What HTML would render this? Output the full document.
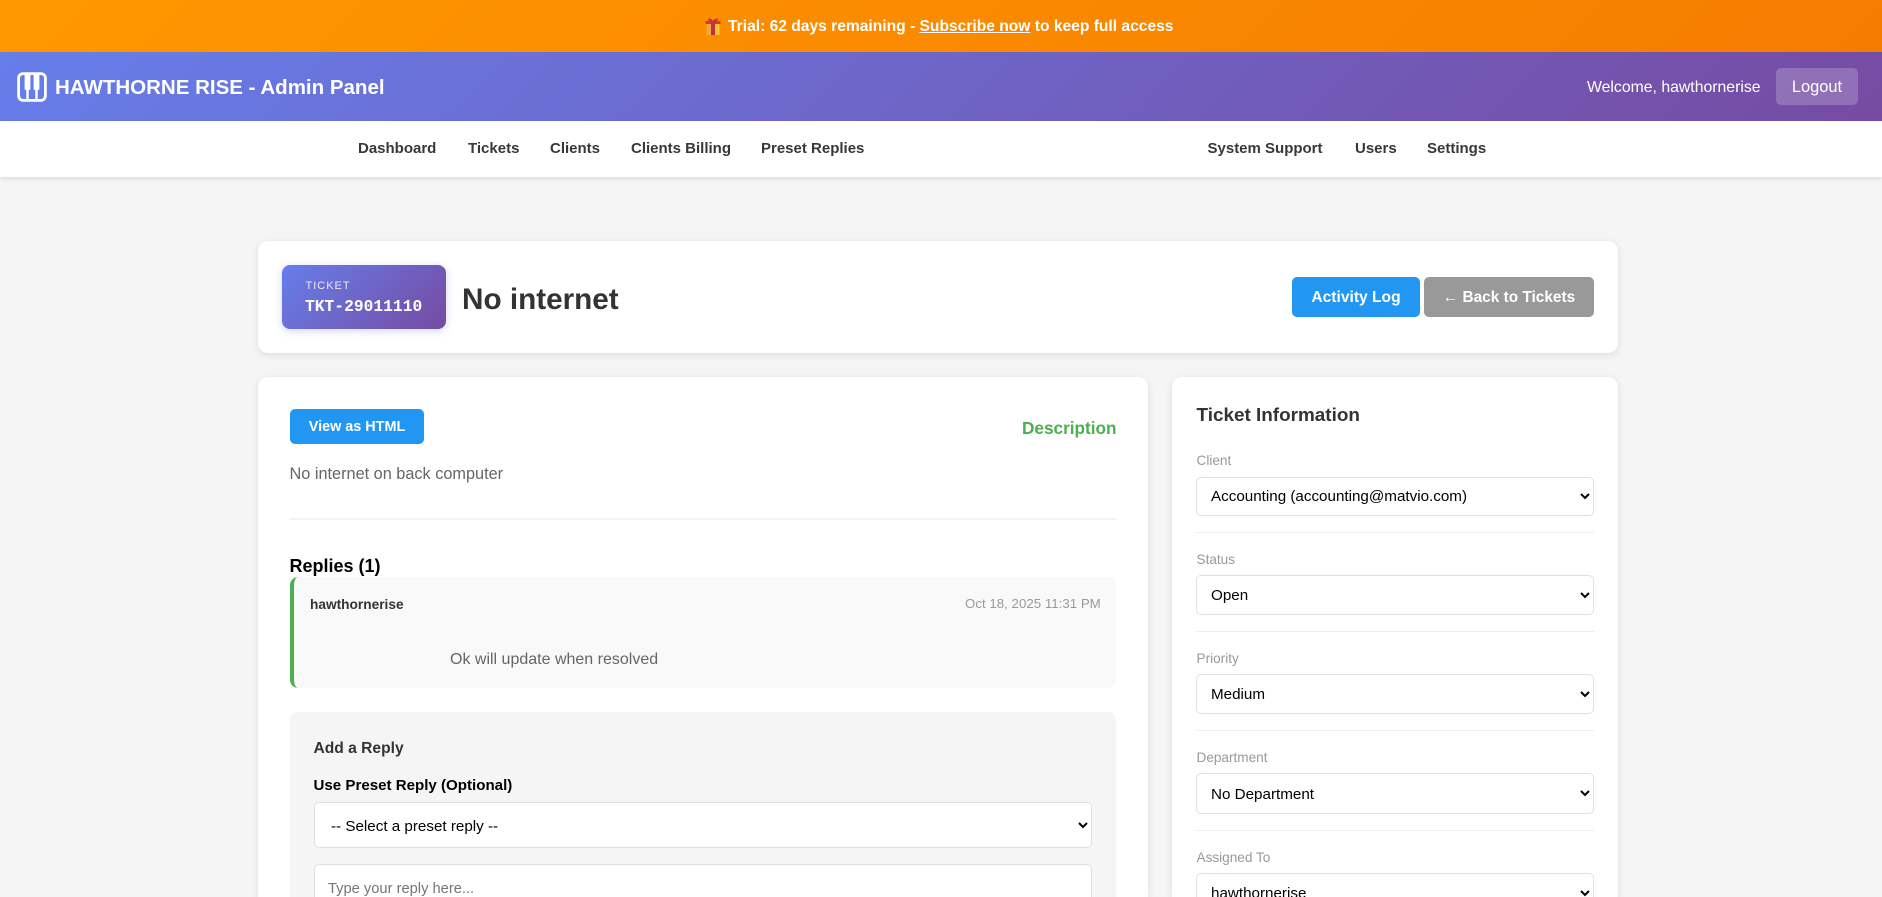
<!DOCTYPE html>
<html lang="en">
<head>
<meta charset="utf-8">
<title>Ticket TKT-29011110</title>
<style>
html,body{margin:0;padding:0;width:1882px;height:897px;overflow:hidden;background:#f5f5f5;font-family:"Liberation Sans",sans-serif}
#p{position:relative;width:1882px;height:897px;overflow:hidden}
#p>*{position:absolute}
.t{white-space:nowrap;line-height:24px;height:24px}
a{color:inherit}
.banner{left:0;top:0;width:1882px;height:52px;background:linear-gradient(135deg,#ff9800,#f57c00)}
.header{left:0;top:52px;width:1882px;height:69px;background:linear-gradient(135deg,#667eea,#764ba2)}
.nav{left:0;top:121px;width:1882px;height:56px;background:#fff;box-shadow:0 2px 4px rgba(0,0,0,.1)}
.n{top:137px;font-size:15px;font-weight:700;color:#383838}
.card{background:#fff;border-radius:10px;box-shadow:0 2px 8px rgba(0,0,0,.1)}
.btn{border-radius:5px;color:#fff;font-weight:700;text-align:center}
.lab{font-size:13.6px;color:#999;left:1196.5px}
.hr{left:1196px;width:398px;height:1px;background:#eee}
select{font-family:"Liberation Sans",sans-serif;font-size:15.2px;color:#000;background:#fff;border:1px solid #e0e0e0;border-radius:5px;padding:1px 10px 0;margin:0;box-sizing:border-box}
.s{left:1196px;width:398px}
</style>
</head>
<body>
<div id="p">
<div class="banner"></div>
<svg style="left:705px;top:18px" width="16" height="17" viewBox="0 0 16 17"><rect x="1.5" y="5" width="13" height="12" fill="#f7c531"/><rect x="1.5" y="5" width="5" height="12" fill="#f2a93b"/><rect x="0.5" y="3" width="15" height="3" fill="#cf3a3f"/><rect x="6" y="3" width="4" height="14" fill="#c5303f"/><path d="M8 3C6 0 3 0 3 1.6 3 3 6 3 8 3 10 3 13 3 13 1.6 13 0 10 0 8 3Z" fill="#c5303f"/></svg>
<div class="t" style="left:728px;top:15px;font-size:15.6px;font-weight:700;color:#fff">Trial: 62 days remaining - <a href="#" style="text-decoration:underline">Subscribe now</a> to keep full access</div>

<div class="header"></div>
<svg style="left:17px;top:72px" width="30" height="30" viewBox="0 0 30 30" fill="none"><rect x="1.6" y="1.6" width="26.8" height="26.8" rx="4.5" stroke="#fff" stroke-width="2.8"/><path d="M10.5 2v26M19.5 2v26" stroke="#fff" stroke-width="2.4"/><rect x="7.6" y="2" width="5.8" height="16" rx="1" fill="#fff"/><rect x="16.6" y="2" width="5.8" height="16" rx="1" fill="#fff"/></svg>
<div class="t" style="left:55px;top:76px;font-size:20.5px;font-weight:700;color:#fff">HAWTHORNE RISE - Admin Panel</div>
<div class="t" style="left:1587px;top:76px;font-size:15.8px;color:#fff">Welcome, hawthornerise</div>
<div class="t" style="left:1776px;top:68px;width:82px;height:37px;line-height:39px;border-radius:5px;background:rgba(255,255,255,.2);color:#fff;font-size:16.4px;text-align:center">Logout</div>

<div class="nav"></div>
<div class="t n" style="left:358px">Dashboard</div>
<div class="t n" style="left:468px">Tickets</div>
<div class="t n" style="left:550px">Clients</div>
<div class="t n" style="left:631px">Clients Billing</div>
<div class="t n" style="left:761px">Preset Replies</div>
<div class="t n" style="left:1207.5px">System Support</div>
<div class="t n" style="left:1355px">Users</div>
<div class="t n" style="left:1427px">Settings</div>

<div class="card" style="left:258px;top:241px;width:1360px;height:112px"></div>
<div style="left:282px;top:265px;width:164px;height:64px;border-radius:8px;background:linear-gradient(135deg,#667eea,#764ba2);box-shadow:0 2px 8px rgba(102,126,234,.3)"></div>
<div class="t" style="left:305.5px;top:274px;font-size:11px;letter-spacing:1px;color:rgba(255,255,255,.85)">TICKET</div>
<div class="t" style="left:305px;top:295px;font-family:'Liberation Mono',monospace;font-size:16.3px;font-weight:700;color:#fff">TKT-29011110</div>
<div class="t" style="left:462px;top:283px;height:32px;line-height:33px;font-size:29.7px;font-weight:700;color:#333">No internet</div>
<div class="t btn" style="left:1292px;top:277px;width:128px;height:40px;line-height:42px;background:#2196F3;font-size:15.6px">Activity Log</div>
<div class="t btn" style="left:1424px;top:277px;width:170px;height:40px;line-height:42px;background:#999;font-size:15.4px">← Back to Tickets</div>

<div class="card" style="left:258px;top:377px;width:890px;height:520px;border-radius:10px 10px 0 0"></div>
<div class="card" style="left:1172px;top:377px;width:446px;height:520px;border-radius:10px 10px 0 0"></div>

<div class="t btn" style="left:290px;top:409px;width:134px;height:35px;line-height:37px;background:#2196F3;font-size:14.4px">View as HTML</div>
<div class="t" style="left:1022px;top:416px;font-size:17.2px;font-weight:700;color:#4CAF50">Description</div>
<div class="t" style="left:289.5px;top:462px;font-size:16.3px;color:#666">No internet on back computer</div>
<div style="left:290px;top:518px;width:826px;height:2px;background:#f3f3f3"></div>
<div class="t" style="left:289.5px;top:554px;font-size:18px;font-weight:700;color:#000">Replies (1)</div>

<div style="left:290px;top:577px;width:822px;height:111px;border-left:4px solid #4CAF50;border-radius:8px;background:#f9f9f9"></div>
<div class="t" style="left:310px;top:593px;font-size:13.7px;font-weight:700;color:#333">hawthornerise</div>
<div class="t" style="left:965px;top:592px;font-size:13.3px;color:#999">Oct 18, 2025 11:31 PM</div>
<div class="t" style="left:450px;top:648px;font-size:16px;color:#666">Ok will update when resolved</div>

<div style="left:290px;top:712px;width:826px;height:185px;border-radius:8px 8px 0 0;background:#f5f5f5"></div>
<div class="t" style="left:313.5px;top:737px;font-size:15.6px;font-weight:700;color:#333">Add a Reply</div>
<div class="t" style="left:313.5px;top:774px;font-size:15.1px;font-weight:700;color:#000">Use Preset Reply (Optional)</div>
<select style="left:314px;top:802px;width:778px;height:46px;font-size:15.2px;padding:2px 10px 0 12px"><option>-- Select a preset reply --</option></select>
<div style="left:314px;top:864px;width:776px;height:33px;background:#fff;border:1px solid #e0e0e0;border-bottom:0;border-radius:5px 5px 0 0"></div>
<div class="t" style="left:328px;top:877px;height:20px;overflow:hidden;font-size:14.7px;color:#757575">Type your reply here...</div>

<div class="t" style="left:1196.5px;top:403.5px;font-size:18.9px;font-weight:700;color:#333">Ticket Information</div>
<div class="t lab" style="top:449px">Client</div>
<select class="s" style="top:477px;height:39px;padding-top:0"><option>Accounting (accounting@matvio.com)</option></select>
<div class="hr" style="top:532px"></div>
<div class="t lab" style="top:548px">Status</div>
<select class="s" style="top:575px;height:40px"><option>Open</option></select>
<div class="hr" style="top:631px"></div>
<div class="t lab" style="top:647px">Priority</div>
<select class="s" style="top:674px;height:40px"><option>Medium</option></select>
<div class="hr" style="top:730px"></div>
<div class="t lab" style="top:746px">Department</div>
<select class="s" style="top:773px;height:41px"><option>No Department</option></select>
<div class="hr" style="top:830px"></div>
<div class="t lab" style="top:846px">Assigned To</div>
<div style="left:1196px;top:873px;width:398px;height:24px;overflow:hidden"><select style="display:block;width:398px;height:40px"><option>hawthornerise</option></select></div>
</div>
</body>
</html>
